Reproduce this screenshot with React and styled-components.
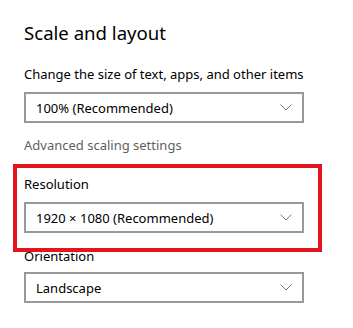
import React from 'react';
import styled, { createGlobalStyle } from 'styled-components';

const GlobalStyle = createGlobalStyle`
  html, body {
    margin: 0;
    background: #fff;
  }
  body {
    font-family: 'Noto Sans', 'Open Sans', sans-serif;
    color: #000;
  }
`;

const Page = styled.div`
  position: relative;
  display: flex;
  flex-direction: column;
  align-items: flex-start;
  padding: 19px 0 0 24px;
  height: 328px;
  box-sizing: border-box;
`;

const Title = styled.h2`
  margin: 0;
  font-size: 18.6px;
  line-height: 27px;
  font-weight: 400;
`;

const Label = styled.div`
  margin-top: ${(p) => p.$gap}px;
  font-size: 13px;
  line-height: 20px;
`;

const Link = styled.div`
  margin-top: 12px;
  font-size: 13px;
  line-height: 20px;
  color: #5f5f5f;
`;

const Select = styled.div`
  display: flex;
  align-items: center;
  justify-content: space-between;
  box-sizing: border-box;
  width: 280px;
  height: 31px;
  margin-top: ${(p) => p.$gap}px;
  padding: 0 10px 0 10px;
  border: 2px solid #999;
  font-size: 13px;
`;

const Chevron = () => (
  <svg width="12" height="7" viewBox="0 0 12 7" fill="none">
    <path d="M0.5 0.5 L6 6 L11.5 0.5" stroke="#7a7a7a" strokeWidth="1" />
  </svg>
);

const Highlight = styled.div`
  position: absolute;
  left: 13px;
  top: 164px;
  width: 309px;
  height: 88px;
  box-sizing: border-box;
  border: 4px solid #e3141f;
  pointer-events: none;
`;

const Dropdown = ({ value, gap }) => (
  <Select $gap={gap}>
    <span>{value}</span>
    <Chevron />
  </Select>
);

export default function App() {
  return (
    <>
      <GlobalStyle />
      <Page>
        <Title>Scale and layout</Title>
        <Label $gap={18}>Change the size of text, apps, and other items</Label>
        <Dropdown value="100% (Recommended)" gap={8} />
        <Link>Advanced scaling settings</Link>
        <Label $gap={19}>Resolution</Label>
        <Dropdown value="1920 × 1080 (Recommended)" gap={8} />
        <Label $gap={13}>Orientation</Label>
        <Dropdown value="Landscape" gap={6} />
        <Highlight />
      </Page>
    </>
  );
}
